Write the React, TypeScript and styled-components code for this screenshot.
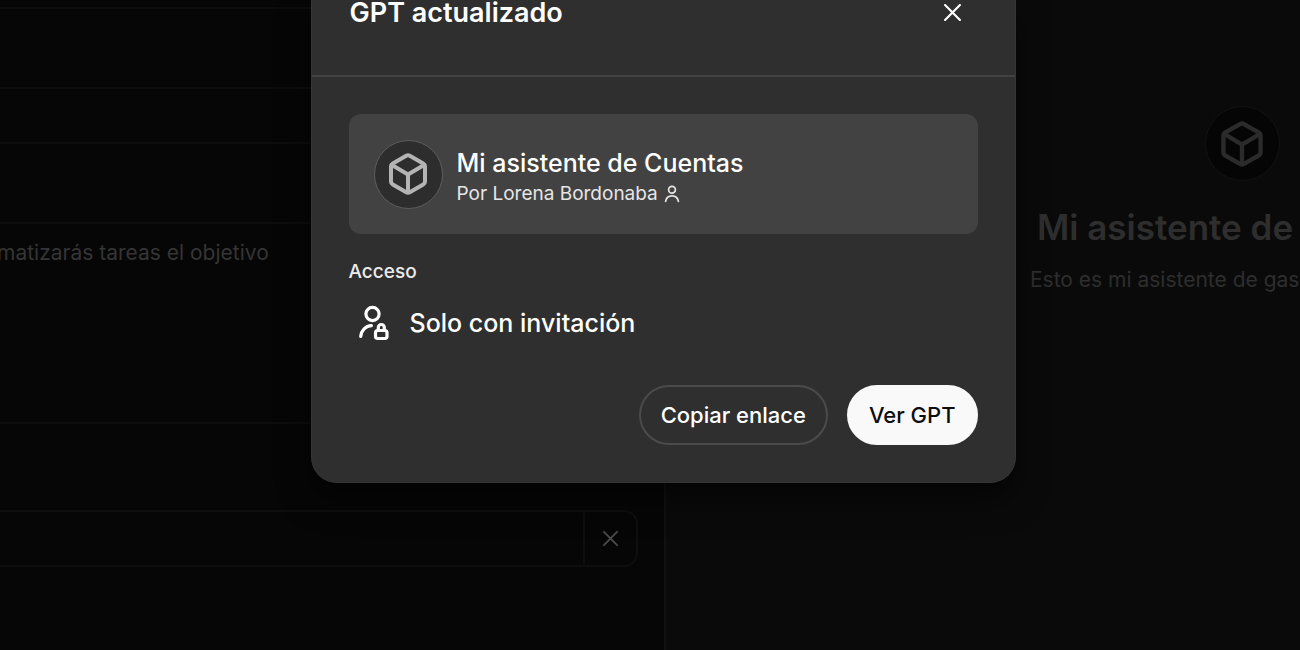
import React from 'react';
import styled, { createGlobalStyle } from 'styled-components';

const GlobalStyle = createGlobalStyle`
  * { box-sizing: border-box; }
  body {
    margin: 0;
    background: #060606;
    color: #ffffff;
    font-family: Inter, "Liberation Sans", sans-serif;
  }
  h1, h2, h3, p { margin: 0; }
  button, input, textarea { font: inherit; color: inherit; }
`;

const Page = styled.div`
  position: relative;
  min-height: 100vh;
  display: grid;
  grid-template-columns: minmax(0, 664fr) minmax(0, 636fr);
  overflow: hidden;
`;

const Editor = styled.main`
  display: flex;
  flex-direction: column;
  padding-right: 26px;
  background: #060606;
`;

const FieldEnd = styled.div`
  height: 9px;
  margin-bottom: 78px;
  border-bottom: 2px solid #0d0d0d;
`;

const TextField = styled.input`
  height: 57px;
  width: 100%;
  padding: 0 20px;
  margin-bottom: 78px;
  background: transparent;
  border: 2px solid #0d0d0d;
  border-left: 0;
  border-radius: 0 14px 14px 0;
`;

const TextBox = styled.textarea`
  height: 202px;
  width: calc(100% + 3px);
  margin: 0 0 86px -3px;
  padding: 14px 20px 14px 0;
  background: transparent;
  border: 2px solid #0d0d0d;
  border-left: 0;
  border-radius: 0 14px 14px 0;
  color: #353535;
  font-size: 21px;
  line-height: 30px;
  resize: none;
`;

const Starter = styled.div`
  height: 57px;
  display: flex;
  border: 2px solid #0e0e0e;
  border-left: 0;
  border-radius: 0 14px 14px 0;
`;

const StarterInput = styled.input`
  flex: 1;
  min-width: 0;
  padding: 0 20px;
  background: transparent;
  border: 0;
`;

const StarterRemove = styled.button`
  width: 53px;
  display: grid;
  place-items: center;
  padding: 0;
  background: transparent;
  border: 0;
  border-left: 2px solid #0e0e0e;
  color: #4a4a4a;
`;

const Preview = styled.aside`
  padding: 106px 0 0 364px;
  background: #0a0a0a;
  border-left: 2px solid #111111;
  overflow: hidden;
  white-space: nowrap;
`;

const PreviewContent = styled.div`
  width: 424px;
  display: flex;
  flex-direction: column;
`;

const Avatar = styled.div<{ $size: number; $dim?: boolean }>`
  flex: none;
  width: ${(p) => p.$size}px;
  height: ${(p) => p.$size}px;
  display: grid;
  place-items: center;
  align-self: center;
  border-radius: 50%;
  border: ${(p) => (p.$dim ? '1px solid #131313' : '1px solid #5e5e5e')};
  background: ${(p) => (p.$dim ? '#050505' : '#2d2d2d')};
  color: ${(p) => (p.$dim ? '#2b2b2b' : '#b4b4b4')};
`;

const PreviewTitle = styled.h1`
  margin-top: 24px;
  padding-left: 7px;
  color: #2e2e2e;
  font-size: 35px;
  line-height: 44px;
  font-weight: 600;
`;

const PreviewText = styled.p`
  margin-top: 16px;
  color: #2e2e2e;
  font-size: 21px;
  line-height: 30px;
`;

const Overlay = styled.div`
  position: absolute;
  inset: 0;
  display: flex;
  justify-content: center;
  align-items: flex-start;
  padding-left: 26px;
`;

const Dialog = styled.section`
  width: 100%;
  max-width: 705px;
  background: #2f2f2f;
  border: 1px solid #363636;
  border-top: 0;
  border-radius: 0 0 26px 26px;
  box-shadow: 0 16px 32px rgba(0, 0, 0, 0.5);
`;

const DialogHeader = styled.header`
  display: flex;
  align-items: center;
  justify-content: space-between;
  height: 77px;
  padding: 0 54px 50px 38px;
  border-bottom: 2px solid #424242;
`;

const DialogTitle = styled.h2`
  font-size: 27px;
  line-height: 26px;
  font-weight: 600;
`;

const CloseButton = styled.button`
  display: grid;
  place-items: center;
  padding: 0;
  border: 0;
  background: transparent;
`;

const DialogBody = styled.div`
  padding: 37px;
`;

const GptCard = styled.div`
  display: flex;
  align-items: center;
  gap: 14px;
  height: 120px;
  padding: 0 25px;
  border-radius: 12px;
  background: #424242;
`;

const GptDetails = styled.div`
  padding-top: 8px;
`;

const GptName = styled.h3`
  font-size: 25px;
  line-height: 32px;
  font-weight: 550;
`;

const GptAuthor = styled.p`
  display: flex;
  align-items: center;
  gap: 6px;
  color: #e6e6e6;
  font-size: 19px;
  line-height: 30px;
`;

const AccessLabel = styled.h3`
  margin-top: 26px;
  color: #ececec;
  font-size: 19px;
  line-height: 24px;
  font-weight: 500;
`;

const AccessRow = styled.div`
  display: flex;
  align-items: center;
  gap: 20px;
  margin-top: 20px;
  padding-left: 9px;
  font-size: 25px;
  line-height: 38px;
  font-weight: 550;
`;

const Actions = styled.div`
  display: flex;
  justify-content: flex-end;
  gap: 19px;
  margin-top: 43px;
`;

const PillButton = styled.button<{ $primary?: boolean }>`
  height: 60px;
  padding: 0 20px;
  border-radius: 30px;
  border: 2px solid ${(p) => (p.$primary ? '#f9f9f9' : '#4b4b4b')};
  background: ${(p) => (p.$primary ? '#f9f9f9' : 'transparent')};
  color: ${(p) => (p.$primary ? '#0d0d0d' : '#ffffff')};
  font-size: 22px;
  line-height: 30px;
  font-weight: 450;
`;

const CubeIcon = ({ size }: { size: number }) => (
  <svg width={size} height={size} viewBox="0 0 44 44" fill="none" stroke="currentColor" strokeWidth="4" strokeLinejoin="round" strokeLinecap="round" aria-hidden="true">
    <path d="M20.2 3.7a3.6 3.6 0 0 1 3.6 0L37.2 11.4a3.6 3.6 0 0 1 1.8 3.1v15a3.6 3.6 0 0 1-1.8 3.1L23.8 40.3a3.6 3.6 0 0 1-3.6 0L6.8 32.6A3.6 3.6 0 0 1 5 29.5v-15a3.6 3.6 0 0 1 1.8-3.1Z" />
    <path d="M6 13 22 22.5 38 13M22 22.5V40" />
  </svg>
);

const CrossIcon = ({ size, weight }: { size: number; weight: number }) => (
  <svg width={size} height={size} viewBox="0 0 16 16" fill="none" stroke="currentColor" strokeWidth={weight} strokeLinecap="round" aria-hidden="true">
    <path d="M1 1 15 15M15 1 1 15" />
  </svg>
);

const PersonIcon = () => (
  <svg width="16" height="18" viewBox="0 0 16 18" fill="none" stroke="currentColor" strokeWidth="1.7" strokeLinecap="round" aria-hidden="true">
    <circle cx="8" cy="4.8" r="3.4" />
    <path d="M1.6 16.3C2.2 12.9 4.8 10.8 8 10.8s5.8 2.1 6.4 5.5" />
  </svg>
);

const PersonLockIcon = () => (
  <svg width="32" height="36" viewBox="0 0 32 36" fill="none" stroke="currentColor" strokeWidth="3.2" strokeLinecap="round" strokeLinejoin="round" aria-hidden="true">
    <circle cx="14.5" cy="9" r="6.6" />
    <path d="M2.7 31.5C3.3 25.5 7.6 21 13.4 20.7" />
    <rect x="17.5" y="25.5" width="11.5" height="8" rx="2.2" />
    <path d="M20.3 24.5v-2a3 3 0 0 1 6 0v2" />
  </svg>
);

export default function App() {
  return (
    <>
      <GlobalStyle />
      <Page>
        <Editor>
          <FieldEnd />
          <TextField aria-label="Descripción" />
          <TextBox aria-label="Instrucciones" defaultValue="matizarás tareas el objetivo" />
          <Starter>
            <StarterInput aria-label="Frase de inicio" />
            <StarterRemove aria-label="Eliminar">
              <CrossIcon size={15} weight={2} />
            </StarterRemove>
          </Starter>
        </Editor>
        <Preview>
          <PreviewContent>
            <Avatar $size={75} $dim>
              <CubeIcon size={48} />
            </Avatar>
            <PreviewTitle>Mi asistente de</PreviewTitle>
            <PreviewText>Esto es mi asistente de gas</PreviewText>
          </PreviewContent>
        </Preview>
        <Overlay>
          <Dialog role="dialog" aria-labelledby="dialog-title">
            <DialogHeader>
              <DialogTitle id="dialog-title">GPT actualizado</DialogTitle>
              <CloseButton aria-label="Cerrar">
                <CrossIcon size={17} weight={2} />
              </CloseButton>
            </DialogHeader>
            <DialogBody>
              <GptCard>
                <Avatar $size={69}>
                  <CubeIcon size={44} />
                </Avatar>
                <GptDetails>
                  <GptName>Mi asistente de Cuentas</GptName>
                  <GptAuthor>
                    Por Lorena Bordonaba
                    <PersonIcon />
                  </GptAuthor>
                </GptDetails>
              </GptCard>
              <AccessLabel>Acceso</AccessLabel>
              <AccessRow>
                <PersonLockIcon />
                Solo con invitación
              </AccessRow>
              <Actions>
                <PillButton>Copiar enlace</PillButton>
                <PillButton $primary>Ver GPT</PillButton>
              </Actions>
            </DialogBody>
          </Dialog>
        </Overlay>
      </Page>
    </>
  );
}
